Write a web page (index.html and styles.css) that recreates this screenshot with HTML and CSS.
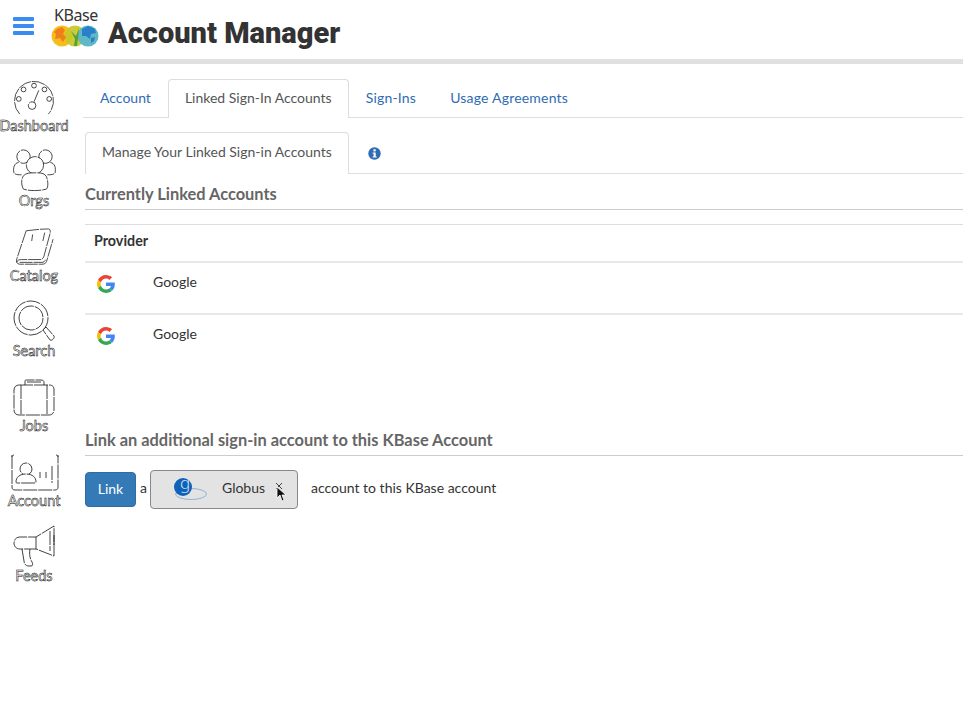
FILE: index.html
```html
<!DOCTYPE html>
<html lang="en">
<head>
    <meta charset="UTF-8">
    <title>Account Manager</title>
    <link rel="stylesheet" href="styles.css">
</head>
<body>
    <header class="topbar">
        <button class="menu-btn" aria-label="Menu"><span></span><span></span><span></span></button>
        <div class="logo">
            <span class="logo-word">KBase</span>
            <svg class="logo-mark" width="48" height="22" viewBox="0 0 48 22">
                <circle cx="11" cy="11" r="10.500" fill="#f8bd1c"/>
                <circle cx="24" cy="11" r="10.500" fill="#c6c92a" opacity=".92"/>
                <circle cx="37" cy="11" r="10.500" fill="#5fb8c6"/>
                <path d="M6 4l5-2 3 3-2 4 3 3-3 5-3-4-5 1 1-5-2-2z" fill="#ef7f1a"/>
                <path d="M23 21l1-7-4-8 5 5 3-8-1 10-1 8z" fill="#5d9e35"/>
                <path d="M31 4l6-3 7 3 1 4-5 1-1 5-4-3-4 0z" fill="#2a7fc9"/>
                <path d="M40 13l4-1-1 4-3 2z" fill="#2a7fc9"/>
            </svg>
        </div>
        <h1 class="page-title">Account Manager</h1>
    </header>

    <div class="layout">
        <nav class="sidebar">
            <a class="nav-item">
                <svg class="nav-icon" width="44" height="38" viewBox="0 0 46 40"><path d="M8 37A20.500 20.500 0 1 1 38 37"/><circle cx="23" cy="7" r="2.500"/><circle cx="12" cy="11" r="2.500"/><circle cx="34" cy="11" r="2.500"/><circle cx="7" cy="21" r="2.500"/><circle cx="39" cy="21" r="2.500"/><circle cx="21" cy="28" r="4"/><path d="M23 24l5-12"/></svg>
                <span>Dashboard</span>
            </a>
            <a class="nav-item">
                <svg class="nav-icon" width="46" height="44" viewBox="0 0 46 46"><circle cx="12" cy="9" r="7"/><circle cx="35" cy="9" r="7"/><path d="M7 15c-5 1-6 6-5 11 1 2 5 2 8 2M40 15c5 1 6 6 5 11-1 2-5 2-8 2"/><circle cx="24" cy="18" r="9"/><path d="M12 29c3-3 6-3 12-3s10 0 12 4c2 5 2 11 0 13-8 2-18 2-24 0-2-3-3-10 0-14z"/></svg>
                <span>Orgs</span>
            </a>
            <a class="nav-item">
                <svg class="nav-icon" width="41" height="39" viewBox="0 0 44 42"><path d="M13 3c8-1 16-2 24-2 2 0 2 2 2 4l-7 26c-1 2-2 3-4 3H8c-3 0-5 1-5 3M13 3L3 33c-1 3 0 6 3 6h24c3 0 4-1 5-3l7-24M20 7l-1 7M33 5l-2 9M6 37h24c2 0 3-1 4-3"/></svg>
                <span>Catalog</span>
            </a>
            <a class="nav-item">
                <svg class="nav-icon" width="42" height="42" viewBox="0 0 42 42"><circle cx="18" cy="18" r="17"/><circle cx="18" cy="18" r="12"/><path d="M30 30l3-3 8 9c1 2-2 5-4 4z"/></svg>
                <span>Search</span>
            </a>
            <a class="nav-item">
                <svg class="nav-icon" width="46" height="38" viewBox="0 0 46 38"><path d="M8 6h30c4 0 5 2 5 5v20c0 3-2 5-5 5H8c-3 0-5-2-5-5V11c0-3 2-5 5-5zM10 6v30M36 6v30M14 6V2c0-1 1-1 2-1h14c2 0 3 1 3 2v3M16 3h15"/></svg>
                <span>Jobs</span>
            </a>
            <a class="nav-item">
                <svg class="nav-icon" width="50" height="38" viewBox="0 0 50 38"><path d="M3 1v32c0 2 1 3 3 3h40c2 0 3-1 3-3V1M3 3c0-1 1-2 2-2M49 3c0-1-1-2-2-2"/><circle cx="17" cy="15" r="6"/><path d="M7 28c0-5 4-8 10-8s10 3 10 8c0 1-1 1-2 1H9c-1 0-2 0-2-1zM31 18v6M37 18v6M43 12v17"/></svg>
                <span>Account</span>
            </a>
            <a class="nav-item">
                <svg class="nav-icon" width="44" height="42" viewBox="0 0 44 42"><path d="M42 1L24 12H8c-4 0-6 3-6 6s2 6 6 6h16l18 7zM38 6v20M42 10v10M10 24l2 12c0 3 2 5 5 5h2c2 0 2-2 1-4-2-3-3-8-2-13M24 12v12"/></svg>
                <span>Feeds</span>
            </a>
        </nav>

        <main class="content">
            <ul class="tabs main-tabs">
                <li class="tab">Account</li>
                <li class="tab active">Linked Sign-In Accounts</li>
                <li class="tab spaced">Sign-Ins</li>
                <li class="tab spaced">Usage Agreements</li>
            </ul>

            <ul class="tabs sub-tabs">
                <li class="tab active">Manage Your Linked Sign-in Accounts</li>
                <li class="tab info">
                    <svg width="13" height="13" viewBox="0 0 13 13"><circle cx="6.500" cy="6.500" r="6.200" fill="#2f6cb3"/><rect x="5.400" y="2.300" width="2.300" height="2.100" fill="#fff"/><path d="M4.600 5.400h3.100v4h1v1.200H4.600V9.400h1V6.600h-1z" fill="#fff"/></svg>
                </li>
            </ul>

            <h2 class="section-title">Currently Linked Accounts</h2>

            <div class="providers">
                <div class="providers-head">Provider</div>
                <div class="provider-row">
                    <svg class="g-logo" width="18" height="18" viewBox="0 0 48 48"><path fill="#EA4335" d="M24 9.500c3.500 0 6.700 1.200 9.200 3.600l6.900-6.900C35.900 2.400 30.500 0 24 0 14.600 0 6.500 5.400 2.600 13.200l8 6.200C12.500 13.700 17.800 9.500 24 9.500z"/><path fill="#4285F4" d="M47.500 24.500c0-1.600-.1-3.100-.4-4.500H24v9h13.200c-.6 3-2.300 5.500-4.800 7.200l7.700 6c4.500-4.200 7.400-10.300 7.400-17.700z"/><path fill="#FBBC05" d="M10.500 28.600c-.5-1.400-.8-3-.8-4.600s.3-3.200.8-4.600l-8-6.200C.9 16.500 0 20.100 0 24s.9 7.500 2.600 10.800z"/><path fill="#34A853" d="M24 48c6.500 0 11.900-2.100 15.900-5.800l-7.700-6c-2.200 1.500-4.900 2.300-8.200 2.300-6.200 0-11.500-4.200-13.400-9.900l-8 6.200C6.500 42.600 14.600 48 24 48z"/></svg>
                    <span>Google</span>
                </div>
                <div class="provider-row">
                    <svg class="g-logo" width="18" height="18" viewBox="0 0 48 48"><path fill="#EA4335" d="M24 9.500c3.500 0 6.700 1.200 9.200 3.600l6.900-6.900C35.900 2.400 30.500 0 24 0 14.600 0 6.500 5.400 2.600 13.200l8 6.200C12.500 13.700 17.800 9.500 24 9.500z"/><path fill="#4285F4" d="M47.500 24.500c0-1.600-.1-3.100-.4-4.500H24v9h13.200c-.6 3-2.300 5.500-4.800 7.200l7.700 6c4.500-4.200 7.400-10.300 7.400-17.700z"/><path fill="#FBBC05" d="M10.500 28.600c-.5-1.400-.8-3-.8-4.600s.3-3.200.8-4.600l-8-6.200C.9 16.500 0 20.100 0 24s.9 7.500 2.600 10.800z"/><path fill="#34A853" d="M24 48c6.500 0 11.900-2.100 15.900-5.800l-7.700-6c-2.200 1.500-4.900 2.300-8.200 2.300-6.200 0-11.500-4.200-13.400-9.900l-8 6.200C6.500 42.600 14.600 48 24 48z"/></svg>
                    <span>Google</span>
                </div>
            </div>

            <h2 class="section-title link-title">Link an additional sign-in account to this KBase Account</h2>

            <div class="link-row">
                <button class="link-btn">Link</button>
                <span class="a-word">a</span>
                <div class="provider-select">
                    <svg class="globus-logo" width="34" height="26" viewBox="0 0 34 26">
                        <ellipse cx="18" cy="17" rx="15.500" ry="5.500" fill="none" stroke="#8fb4dc" stroke-width="1"/>
                        <circle cx="10" cy="10" r="9" fill="#0f62b8"/>
                        <text x="12" y="12" text-anchor="middle" class="globus-g">g</text>
                    </svg>
                    <span class="select-label">Globus</span>
                    <svg class="cursor" width="14" height="22" viewBox="0 0 14 22"><path d="M1 1l6 6M7 1L1 7" stroke="#444" stroke-width="1"/><path d="M2 5v11l3-3 2 6 2-1-2-5h4z" fill="#111" stroke="#fff" stroke-width=".8"/></svg>
                </div>
                <span class="suffix">account to this KBase account</span>
            </div>
        </main>
    </div>
</body>
</html>
```

FILE: styles.css
```css
/* page */
body {
    margin: 0;
    font-family: Lato, "Noto Sans", sans-serif;
    font-size: 14px;
    color: #333;
    background: #fff;
}

/* top bar */
.topbar {
    display: flex;
    align-items: flex-start;
    height: 59px;
    border-bottom: 5px solid #e0e0e0;
}

.menu-btn {
    display: flex;
    flex-direction: column;
    gap: 3px;
    width: 21px;
    margin: 17px 0 0 13px;
    padding: 0;
    border: 0;
    background: none;
}

.menu-btn span {
    display: block;
    height: 4px;
    border-radius: 1px;
    background: #3b8cf0;
}

.logo {
    display: flex;
    flex-direction: column;
    width: 48px;
    margin: 6px 0 0 17px;
}

.logo-word {
    margin-left: 3px;
    font-family: "Noto Sans", sans-serif;
    font-size: 16px;
    letter-spacing: -0.4px;
    line-height: 18px;
    color: #333;
}

.logo-mark {
    display: block;
    margin-top: 1px;
}

.page-title {
    margin: 15px 0 0 9px;
    font-family: Roboto, sans-serif;
    font-size: 29px;
    font-weight: 900;
    line-height: 36px;
    color: #333;
}

/* layout */
.layout {
    display: flex;
}

.sidebar {
    flex: none;
    display: flex;
    flex-direction: column;
    gap: 5px;
    width: 68px;
}

.nav-item {
    display: flex;
    flex-direction: column;
    align-items: center;
    justify-content: flex-end;
    height: 70px;
}

.nav-icon {
    display: block;
    fill: #fff;
    stroke: #111;
    stroke-width: 0.8;
    stroke-dasharray: 14 1;
}

.nav-item span {
    font-size: 14.500px;
    line-height: 17px;
    color: #fff;
    -webkit-text-stroke: 0.500px #000;
}

.content {
    flex: 1;
    min-width: 0;
    margin-left: 17px;
}

/* tabs */
.tabs {
    display: flex;
    margin: 0;
    padding: 0;
    list-style: none;
    border-bottom: 1px solid #ddd;
}

.tab {
    padding: 0 16px;
    border: 1px solid transparent;
    border-bottom: 0;
    line-height: 36px;
    color: #2f6cb3;
    white-space: nowrap;
}

.tab.spaced {
    letter-spacing: 0.2px;
}

.tab.active {
    margin-bottom: -1px;
    border-color: #ddd;
    border-radius: 4px 4px 0 0;
    background: #fff;
    color: #555;
}

.main-tabs {
    height: 38px;
    margin-top: 15px;
    margin-left: -2px;
}

.sub-tabs {
    height: 41px;
    margin-top: 14px;
}

.sub-tabs .tab {
    line-height: 38px;
}

.tab.info {
    display: flex;
    align-items: center;
    padding: 0 0 0 18px;
    height: 40px;
}

/* sections */
.section-title {
    margin: 10px 0 0;
    padding-bottom: 5px;
    border-bottom: 1px solid #ccc;
    font-size: 16.400px;
    font-weight: 700;
    line-height: 20px;
    color: #666;
}

.providers {
    height: 205px;
    margin-top: 14px;
    border-top: 1px solid #ddd;
}

.providers-head {
    padding: 0 0 4px 9px;
    font-size: 14.300px;
    font-weight: 700;
    line-height: 32px;
    border-bottom: 2px solid #e8e8e8;
}

.provider-row {
    display: flex;
    align-items: flex-start;
    height: 40px;
    padding-top: 10px;
    border-bottom: 2px solid #e8e8e8;
}

.provider-row:last-child {
    border-bottom: 0;
}

.g-logo {
    flex: none;
    margin: 2px 38px 0 12px;
}

.link-title {
    margin-top: 0;
}

/* link row */
.link-row {
    display: flex;
    align-items: center;
    margin-top: 14px;
}

.link-btn {
    width: 51px;
    height: 35px;
    padding: 0 0 3px;
    border: 1px solid #2e6da4;
    border-radius: 4px;
    background: #337ab7;
    color: #fff;
    font: inherit;
}

.a-word {
    margin: 0 3px 0 4px;
    padding-bottom: 4px;
}

.provider-select {
    display: flex;
    align-items: center;
    box-sizing: border-box;
    width: 148px;
    height: 39px;
    border: 1px solid #888;
    border-radius: 4px;
    background: #e3e3e3;
}

.globus-logo {
    margin-left: 22px;
    overflow: visible;
}

.globus-g {
    font-family: "Noto Sans", sans-serif;
    font-size: 17px;
    font-weight: 300;
    fill: #cfe0f4;
}

.select-label {
    margin-left: 15px;
    padding-bottom: 4px;
}

.cursor {
    margin: 7px 0 0 10px;
}

.suffix {
    margin-left: 13px;
    padding-bottom: 4px;
}
```
